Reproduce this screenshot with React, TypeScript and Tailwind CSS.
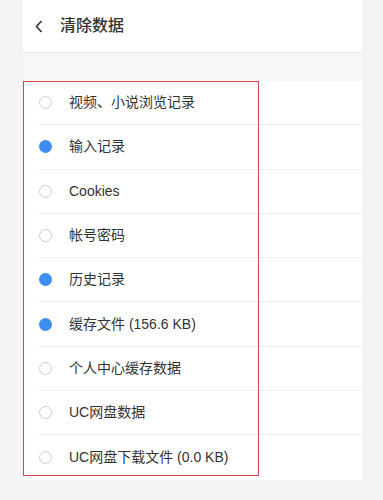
import React from 'react';

type Item = { label: string; checked: boolean };

const items: Item[] = [
  { label: '视频、小说浏览记录', checked: false },
  { label: '输入记录', checked: true },
  { label: 'Cookies', checked: false },
  { label: '帐号密码', checked: false },
  { label: '历史记录', checked: true },
  { label: '缓存文件 (156.6 KB)', checked: true },
  { label: '个人中心缓存数据', checked: false },
  { label: 'UC网盘数据', checked: false },
  { label: 'UC网盘下载文件 (0.0 KB)', checked: false },
];

function Radio({ checked }: { checked: boolean }) {
  return checked ? (
    <span className="block w-[13px] h-[13px] rounded-full bg-[#3d8ef0] shrink-0" />
  ) : (
    <span className="block w-[13px] h-[13px] rounded-full border border-[#cfcfcf] bg-white shrink-0" />
  );
}

export default function App() {
  return (
    <div
      className="relative w-[383px] h-[500px] bg-[#f3f3f3] overflow-hidden"
      style={{ fontFamily: '"Liberation Sans", "Noto Sans CJK SC", sans-serif' }}
    >
      <div className="mx-[23px] w-[339px]">
        {/* header */}
        <div className="h-[53px] bg-white border-b border-[#e6e6e6] flex items-center">
          <svg width="8" height="13" viewBox="0 0 8 13" className="ml-[12px]">
            <path d="M6.5 1 L1.5 6.5 L6.5 12" fill="none" stroke="#333" strokeWidth="1.6" />
          </svg>
          <span className="ml-[17px] text-[16px] font-medium text-[#333]">清除数据</span>
        </div>
        <div className="h-[28px] bg-[#f7f7f7]" />

        {/* options */}
        <div className="bg-white">
          {items.map((it, i) => (
            <div key={i} className="pl-4">
              <div
                className={`h-[44.3px] flex items-center ${
                  i < items.length - 1 ? 'border-b border-[#efefef]' : ''
                }`}
              >
                <Radio checked={it.checked} />
                <span className="ml-[17px] text-[14px] text-[#333]">{it.label}</span>
              </div>
            </div>
          ))}
        </div>
      </div>

      {/* annotation box */}
      <div className="absolute left-[23px] top-[81px] w-[236px] h-[395px] border border-[#d9454d] pointer-events-none" />
    </div>
  );
}
